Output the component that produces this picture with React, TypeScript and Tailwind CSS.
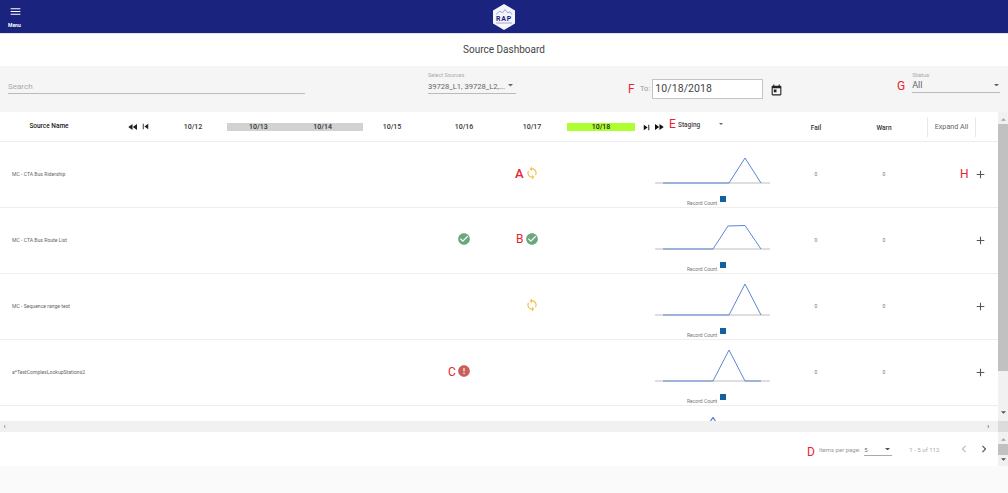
import {
  MdAdd,
  MdCheckCircle,
  MdChevronLeft,
  MdChevronRight,
  MdError,
  MdFastForward,
  MdFastRewind,
  MdMenu,
  MdSkipNext,
  MdSkipPrevious,
  MdSync,
  MdToday,
} from 'react-icons/md';

type Status = 'sync' | 'ok' | 'error' | null;

interface SourceRow {
  name: string;
  d16: Status;
  d17: Status;
  points: string;
}

const rows: SourceRow[] = [
  { name: 'MC - CTA Bus Ridership', d16: null, d17: 'sync', points: '8,42 74,42 90,17 106,42' },
  { name: 'MC - CTA Bus Route List', d16: 'ok', d17: 'ok', points: '8,42 58,42 73,19 90,18.5 106,42' },
  { name: 'MC - Sequence range test', d16: null, d17: 'sync', points: '8,42 74,42 90,11 106,42' },
  { name: 'a*TestComplexLookupStations2', d16: 'error', d17: null, points: '8,42 58,42 74,11 90,42 106,42' },
];

const gridCols =
  'grid grid-cols-[159px_68px_136px_58px_86px_50px_10px_68px_149px_64px_72px_78px] items-center';

const Caret = ({ className }: { className: string }) => (
  <svg viewBox="0 0 8 4" className={className}>
    <path d="M0 0h8L4 4z" fill="currentColor" />
  </svg>
);

const StatusIcon = ({ status }: { status: Status }) => {
  if (status === 'sync') return <MdSync className="mb-[3px] text-[14px] text-[#f8bf4f]" />;
  if (status === 'ok') return <MdCheckCircle className="mb-[3px] text-[14px] text-[#6aa77a]" />;
  if (status === 'error') return <MdError className="mb-[3px] text-[14px] text-[#c9605a]" />;
  return null;
};

const Chart = ({ points }: { points: string }) => (
  <div className="flex h-[65px] flex-col pl-5">
    <svg width="115" height="46" viewBox="0 0 115 46" className="mt-[-1px] shrink-0">
      <line x1="0" y1="42" x2="115" y2="42" stroke="#bdbdbd" strokeWidth="1" />
      <polyline points={points} fill="none" stroke="#5c85d9" strokeWidth="1" />
    </svg>
    <div className="flex h-[16px] items-start pl-[32px]">
      <span className="mt-[13px] text-[5px] leading-[6px] text-[#777]">Record Count</span>
      <span className="ml-[3px] mt-[9px] h-[6px] w-[6px] bg-[#135f9f]" />
    </div>
  </div>
);

const Row = ({ row }: { row: SourceRow }) => (
  <div className={`${gridCols} h-[66px] border-b border-[#eeeeee]`}>
    <div className="pl-3 text-[5.100px] text-[#666]">{row.name}</div>
    <div />
    <div />
    <div />
    <div className="flex justify-center">
      <StatusIcon status={row.d16} />
    </div>
    <div className="flex justify-center">
      <StatusIcon status={row.d17} />
    </div>
    <div />
    <div />
    <Chart points={row.points} />
    <div className="text-center text-[5px] text-[#777]">0</div>
    <div className="text-center text-[5px] text-[#777]">0</div>
    <div className="flex justify-end pr-[11px]">
      <MdAdd className="text-[13px] text-[#555]" />
    </div>
  </div>
);

const HeaderDate = ({ label }: { label: string }) => (
  <div className="text-center text-[7px] font-medium text-[#333]">{label}</div>
);

export default function App() {
  return (
    <div className="relative flex h-[493px] w-[1008px] flex-col overflow-hidden bg-white font-['Roboto',sans-serif]">
      <header className="relative flex h-[34px] shrink-0 items-center justify-center border-b border-[#dfe3f2] bg-[#1a237e]">
        <div className="absolute left-[8px] top-[5px] flex flex-col items-start">
          <MdMenu className="ml-[1px] text-[13px] text-white" />
          <span className="mt-[4px] text-[5px] font-bold leading-[6px] text-white">Menu</span>
        </div>
        <svg width="24" height="28" viewBox="0 0 24 28">
          <path d="M12 1 23 7.500v13L12 27 1 20.500v-13z" fill="#f4f5fa" />
          <path d="M4 11.500 8 8l2.500 2L13 6.500l3 3.500 2-1.500 2 3" fill="none" stroke="#8d92c4" strokeWidth="0.8" />
          <text x="12" y="17.500" textAnchor="middle" fontSize="7" fontWeight="700" letterSpacing="0.8" fill="#1a237e">
            RAP
          </text>
          <line x1="4" y1="20" x2="20" y2="20" stroke="#8d92c4" strokeWidth="0.8" />
        </svg>
      </header>

      <div className="flex h-[32px] shrink-0 items-center justify-center pb-[1px] text-[10px] text-[#444]">
        Source Dashboard
      </div>

      <div className="flex h-[46px] shrink-0 items-stretch bg-[#f5f5f5]">
        <div className="ml-2 mt-[14px] h-[14px] w-[297px] border-b border-[#bbbbbb] pt-[1px] text-[8px] leading-[12px] text-[#aaa]">
          Search
        </div>
        <div className="ml-[123px] mt-[6px] w-[88px]">
          <div className="text-[5.500px] leading-[7px] text-[#aaa]">Select Sources</div>
          <div className="mt-[1px] flex h-[14px] items-center justify-between border-b border-[#bbbbbb] pr-[3px] text-[7.600px] text-[#666]">
            <span>39728_L1, 39728_L2,...</span>
            <Caret className="mb-[2px] h-[2.500px] w-[5px] text-[#666]" />
          </div>
        </div>
        <div className="ml-[124px] flex items-center">
          <span className="mr-[2px] text-[7.500px] text-[#999]">To:</span>
          <div className="flex h-[20px] w-[111px] items-center border border-[#c4c4c4] bg-white pl-[2px] text-[10.500px] tracking-[0.1px] text-[#444]">
            10/18/2018
          </div>
          <MdToday className="ml-[7px] mt-[2px] text-[13px] text-[#222]" />
        </div>
        <div className="ml-[129px] mt-[5px] w-[88px]">
          <div className="text-[6px] leading-[7px] text-[#aaa]">Status</div>
          <div className="mt-[1px] flex h-[14px] items-center justify-between border-b border-[#bbbbbb] pr-[1px] pt-[1px] text-[9px] text-[#666]">
            <span>All</span>
            <Caret className="mb-[2px] h-[2.500px] w-[5px] text-[#666]" />
          </div>
        </div>
      </div>

      <div className="flex h-[309px] shrink-0">
        <div className="w-[998px]">
          <div className={`${gridCols} h-[30px] border-b border-[#eeeeee] pt-[1px]`}>
            <div className="flex items-center">
              <span className="mb-[1px] w-[98px] text-center text-[6.500px] font-medium text-[#222]">Source Name</span>
              <span className="mb-[1px] ml-[29px] flex items-center text-[#222]">
                <MdFastRewind className="text-[12px]" />
                <MdSkipPrevious className="ml-[1px] text-[11px]" />
              </span>
            </div>
            <HeaderDate label="10/12" />
            <div className="flex h-[8px] items-center justify-between bg-[#d2d2d2] pl-[22px] pr-[31px] text-[7px] font-medium text-[#333]">
              <span>10/13</span>
              <span>10/14</span>
            </div>
            <HeaderDate label="10/15" />
            <HeaderDate label="10/16" />
            <HeaderDate label="10/17" />
            <div />
            <div className="flex h-[8px] items-center justify-center bg-[#adff2f] text-[7px] font-medium text-[#222]">10/18</div>
            <div className="flex items-center pl-[6px]">
              <span className="flex w-[37px] items-center text-[#111]">
                <MdSkipNext className="text-[11px]" />
                <MdFastForward className="ml-[1px] text-[12px]" />
              </span>
              <span className="mb-[3px] w-[41px] text-[6.500px] font-medium text-[#444]">Staging</span>
              <Caret className="mb-[6px] h-[2px] w-[4px] text-[#666]" />
            </div>
            <div className="pt-[3px] text-center text-[6.500px] font-medium text-[#333]">Fail</div>
            <div className="pt-[3px] text-center text-[6.500px] font-medium text-[#333]">Warn</div>
            <div className="ml-[7px] flex h-[20px] w-[49px] items-center justify-center border-x border-[#e8e8e8] text-[7.200px] text-[#666]">
              Expand All
            </div>
          </div>
          {rows.map((row) => (
            <Row key={row.name} row={row} />
          ))}
          <div className="flex h-[15px] items-end overflow-hidden pl-[710px]">
            <svg width="6" height="4" viewBox="0 0 6 4">
              <path d="M0.500 4 3 0.500 5.500 4" fill="none" stroke="#4f7bd6" strokeWidth="1.200" />
            </svg>
          </div>
        </div>
        <div className="flex w-[10px] flex-col items-center bg-[#f1f1f1]">
          <Caret className="mt-[6px] h-[3px] w-[5px] rotate-180 text-[#a3a3a3]" />
          <div className="mt-[3px] h-[247px] w-full bg-[#c1c1c1]" />
          <Caret className="mt-[40px] h-[3px] w-[5px] text-[#505050]" />
        </div>
      </div>

      <div className="flex h-[11px] shrink-0 items-center bg-[#f1f1f1]">
        <Caret className="ml-[3px] h-[5px] w-[3px] rotate-90 scale-x-150 text-[#a3a3a3]" />
        <Caret className="ml-[981px] h-[5px] w-[3px] -rotate-90 scale-x-150 text-[#909090]" />
        <div className="ml-auto h-full w-[10px] bg-[#dcdcdc]" />
      </div>

      <div className="flex h-[34px] shrink-0 items-center">
        <span className="ml-[819px] text-[6px] text-[#999]">Items per page:</span>
        <div className="ml-[4px] flex h-[13px] w-[28px] items-center justify-between border-b border-[#aaaaaa] pr-[2px] pt-[1px] text-[6px] text-[#666]">
          <span>5</span>
          <Caret className="h-[2.500px] w-[5px] text-[#555]" />
        </div>
        <span className="ml-[17px] text-[6px] text-[#aaa]">1 - 5 of 112</span>
        <MdChevronLeft className="ml-[18px] text-[14px] text-[#bbbbbb]" />
        <MdChevronRight className="ml-[6px] text-[14px] text-[#555]" />
        <div className="ml-auto flex h-full w-[10px] flex-col items-center bg-[#f1f1f1]">
          <Caret className="mt-[6px] h-[3px] w-[5px] rotate-180 text-[#a3a3a3]" />
          <div className="mt-[3px] h-[11px] w-full bg-[#c1c1c1]" />
          <Caret className="mt-[3px] h-[3px] w-[5px] text-[#505050]" />
        </div>
      </div>

      <div className="flex-1 bg-[#fafafa]" />

      <span className="absolute left-[515px] top-[164px] text-[13px] font-medium text-[#e8252f]">A</span>
      <span className="absolute left-[516px] top-[230px] text-[12px] text-[#e8252f]">B</span>
      <span className="absolute left-[448px] top-[363px] text-[12px] text-[#e8252f]">C</span>
      <span className="absolute left-[807px] top-[443px] text-[12px] text-[#e8252f]">D</span>
      <span className="absolute left-[669px] top-[115px] text-[12px] text-[#e8252f]">E</span>
      <span className="absolute left-[628px] top-[80px] text-[12px] text-[#e8252f]">F</span>
      <span className="absolute left-[897px] top-[77px] text-[12px] text-[#e8252f]">G</span>
      <span className="absolute left-[960px] top-[165px] text-[12px] text-[#e8252f]">H</span>
    </div>
  );
}
